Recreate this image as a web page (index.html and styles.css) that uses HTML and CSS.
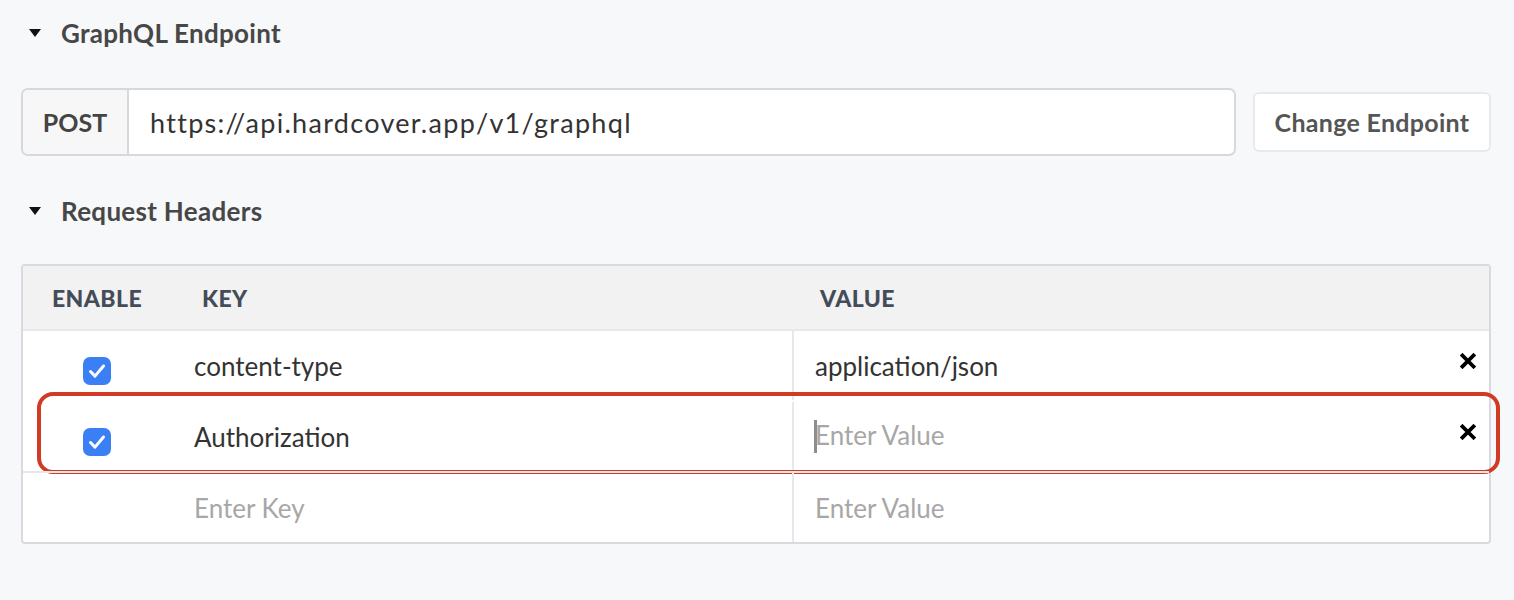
FILE: index.html
```html
<!DOCTYPE html>
<html>
<head>
<meta charset="utf-8">
<link rel="stylesheet" href="styles.css">
</head>
<body>
<div class="page">
  <section class="section">
    <div class="section-title"><span class="caret"></span><span>GraphQL Endpoint</span></div>
    <div class="endpoint-row">
      <div class="input-group">
        <span class="method">POST</span>
        <span class="url">https://api.hardcover.app/v1/graphql</span>
      </div>
      <button class="btn">Change Endpoint</button>
    </div>
  </section>
  <section class="section">
    <div class="section-title second"><span class="caret"></span><span>Request Headers</span></div>
    <div class="table">
      <div class="row thead">
        <div class="cell c-enable">ENABLE</div>
        <div class="cell c-key">KEY</div>
        <div class="cell c-value">VALUE</div>
      </div>
      <div class="row">
        <div class="cell c-enable"><span class="check"><svg viewBox="0 0 28 28" width="28" height="28"><path d="M7.5 14.5l4.5 4.6L20.5 9" fill="none" stroke="#fff" stroke-width="3" stroke-linecap="round" stroke-linejoin="round"/></svg></span></div>
        <div class="cell c-key text">content-type</div>
        <div class="cell c-value text"><span>application/json</span><span class="del"><svg viewBox="0 0 16 16" width="16" height="16"><path d="M2.5 2.5l11 11M13.5 2.5l-11 11" stroke="#000" stroke-width="3.8" stroke-linecap="square"/></svg></span></div>
      </div>
      <div class="row highlighted">
        <div class="cell c-enable"><span class="check"><svg viewBox="0 0 28 28" width="28" height="28"><path d="M7.5 14.5l4.5 4.6L20.5 9" fill="none" stroke="#fff" stroke-width="3" stroke-linecap="round" stroke-linejoin="round"/></svg></span></div>
        <div class="cell c-key text">Authorization</div>
        <div class="cell c-value text"><span class="placeholder"><span class="caret-line"></span>Enter Value</span><span class="del"><svg viewBox="0 0 16 16" width="16" height="16"><path d="M2.5 2.5l11 11M13.5 2.5l-11 11" stroke="#000" stroke-width="3.8" stroke-linecap="square"/></svg></span></div>
        <div class="annot"></div>
      </div>
      <div class="row last">
        <div class="cell c-enable"></div>
        <div class="cell c-key text placeholder">Enter Key</div>
        <div class="cell c-value text placeholder">Enter Value</div>
      </div>
    </div>
  </section>
</div>
</body>
</html>
```

FILE: styles.css
```css
* { box-sizing: border-box; }
html, body { margin: 0; padding: 0; }
body {
  background: #f7f8fa;
  font-family: Lato, "Noto Sans", sans-serif;
  color: #333;
}
.page {
  padding: 13px 23px 0 21px;
}
.section-title {
  display: flex;
  align-items: center;
  height: 40px;
  padding-left: 8px;
  gap: 20px;
  font-size: 26px;
  font-weight: 700;
  color: #474747;
  letter-spacing: 0.3px;
}
.section-title.second { margin-top: 35px; }
.caret {
  width: 0; height: 0;
  border-left: 6px solid transparent;
  border-right: 6px solid transparent;
  border-top: 8px solid #111;
}
.endpoint-row {
  display: flex;
  align-items: center;
  gap: 17px;
  margin-top: 35px;
}
.input-group {
  flex: 1;
  display: flex;
  height: 68px;
  border: 2px solid #d6d8dc;
  border-radius: 7px;
  background: #fff;
  overflow: hidden;
}
.method {
  width: 106px;
  display: flex;
  align-items: center;
  justify-content: center;
  background: #f7f7f8;
  border-right: 2px solid #d6d8dc;
  font-size: 25px;
  font-weight: 700;
  color: #444;
}
.url {
  display: flex;
  align-items: center;
  padding-left: 21px;
  font-size: 27px;
  letter-spacing: 1.3px;
  color: #333;
}
.btn {
  width: 238px;
  height: 60px;
  border: 2px solid #e8e9ec;
  border-radius: 6px;
  background: #fff;
  font-family: inherit;
  font-size: 25px;
  font-weight: 700;
  letter-spacing: 0.3px;
  color: #555;
  padding: 0;
}
.table {
  margin-top: 33px;
  border: 2px solid #d8dadf;
  border-radius: 4px;
  background: #fff;
}
.row {
  display: grid;
  grid-template-columns: 147px 622px 1fr;
  height: 71px;
  border-top: 2px solid #e6e8eb;
  position: relative;
}
.row.highlighted { border-top-color: transparent; }
.row.thead {
  height: 63px;
  border-top: 0;
  background: #f2f2f2;
}
.cell {
  display: flex;
  align-items: center;
}
.thead .cell {
  font-size: 23px;
  font-weight: 900;
  color: #454c59;
  letter-spacing: 0.4px;
}
.thead .c-enable { padding-left: 29px; }
.thead .c-key { padding-left: 32px; }
.thead .c-value { padding-left: 28px; border-left: 0; }
.c-enable { justify-content: center; }
.thead .c-enable { justify-content: flex-start; }
.c-key.text { padding-left: 24px; }
.c-value { border-left: 2px solid #e6e8eb; }
.c-value.text {
  padding-left: 21px;
  padding-right: 13px;
  justify-content: space-between;
}
.text { font-size: 26px; color: #333; }
.placeholder { color: #a7a7a7; }
.check {
  width: 28px; height: 28px;
  border-radius: 7px;
  background: #3b7ff5;
  display: block;
  margin-left: 0;
  margin-top: 10px;
}
.check svg { display: block; }
.del { display: flex; margin-top: -10px; }
.del svg { display: block; }
.caret-line {
  display: inline-block;
  width: 3px;
  height: 33px;
  background: #8d8d8d;
  vertical-align: middle;
  margin-right: -3px;
  position: relative;
  top: -1px;
  left: -1px;
}
.annot {
  position: absolute;
  left: 14px;
  right: -11px;
  top: -10px;
  bottom: -3px;
  border: 4px solid #d13b24;
  border-radius: 16px;
  pointer-events: none;
}
```
